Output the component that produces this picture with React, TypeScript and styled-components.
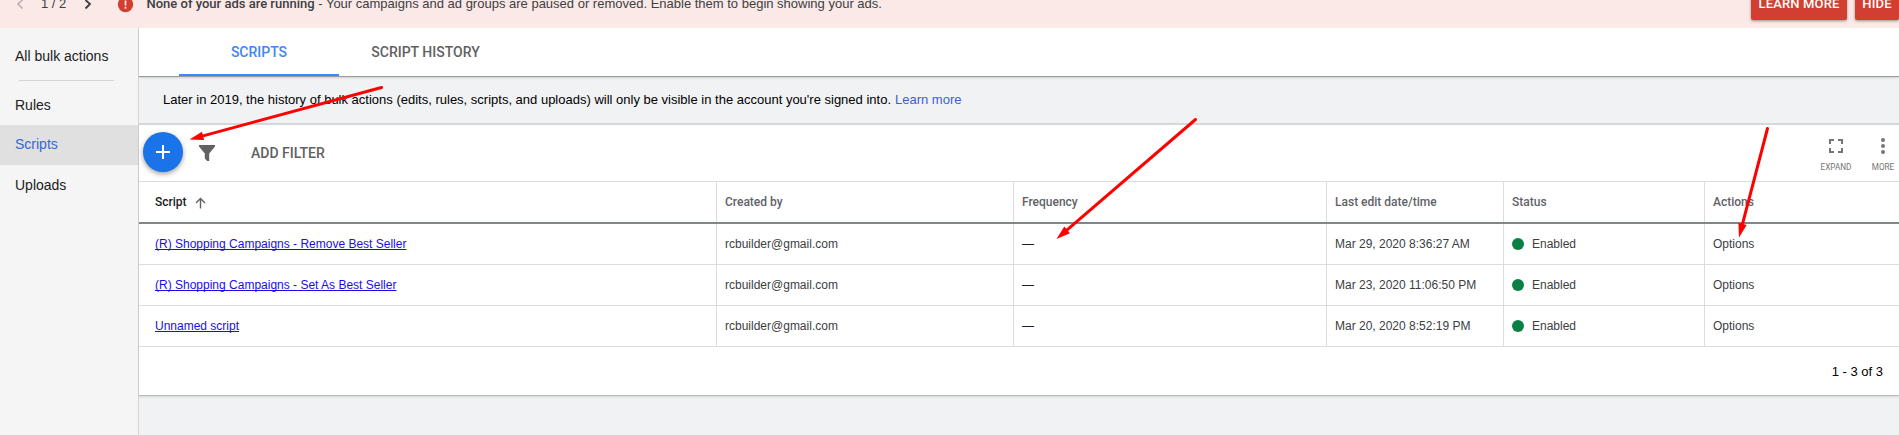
import React from 'react';
import styled, { createGlobalStyle } from 'styled-components';

const TEXT_FONT = "'Liberation Sans', Arial, sans-serif";
const TITLE_FONT = "Roboto, 'Liberation Sans', sans-serif";

const GlobalStyle = createGlobalStyle`
  * { box-sizing: border-box; }
  body { margin: 0; font-family: ${TEXT_FONT}; background: #f1f2f4; overflow: hidden; }
`;

const Page = styled.div`
  position: relative;
  width: 1899px;
  height: 435px;
  display: flex;
  flex-direction: column;
  overflow: hidden;
`;

const Banner = styled.header`
  flex: none;
  height: 28px;
  display: flex;
  align-items: flex-start;
  background: #fae9e7;
  color: #3c4043;
  font-size: 13px;
  line-height: 16px;
  white-space: nowrap;
  overflow: hidden;
`;

const Pager = styled.div`
  flex: none;
  width: 117px;
  height: 8px;
  display: flex;
  align-items: center;
  padding-left: 16px;
`;

const PagerCount = styled.span`
  width: 26px;
  margin: 0 17px;
  white-space: nowrap;
`;

const AlertIcon = styled.svg`
  display: block;
  margin-top: -4px;
  width: 17px;
  height: 17px;
`;

const BannerText = styled.p`
  flex: 1;
  margin: -4px 0 0 12.5px;
  b {
    font-family: ${TITLE_FONT};
    font-weight: 500;
  }
`;

const BannerButton = styled.button<{ $width: number }>`
  width: ${(p) => p.$width}px;
  height: 32px;
  margin: -12px 0 0 8px;
  padding: 0;
  border: 0;
  border-radius: 2px;
  background: #d23f31;
  color: #fff;
  font: 500 13px/32px ${TITLE_FONT};
  letter-spacing: 0.15px;
  white-space: nowrap;
  box-shadow: 0 1px 3px rgba(0, 0, 0, 0.4);
`;

const Body = styled.div`
  flex: 1;
  display: flex;
  min-height: 0;
`;

const Sidebar = styled.nav`
  flex: none;
  width: 139px;
  background: #f5f5f5;
  border-right: 1px solid #d5d5d5;
  display: flex;
  flex-direction: column;
`;

const NavItem = styled.a<{ $active?: boolean; $height: number; $top?: number; $bottom?: number }>`
  height: ${(p) => p.$height}px;
  display: flex;
  align-items: center;
  padding: ${(p) => p.$top || 0}px 0 ${(p) => p.$bottom || 0}px 15px;
  font-size: 14px;
  color: ${(p) => (p.$active ? '#3367d6' : '#212121')};
  background: ${(p) => (p.$active ? '#e0e0e0' : 'transparent')};
`;

const NavDivider = styled.hr`
  width: 95px;
  height: 1px;
  margin: 0 0 0 19px;
  border: 0;
  background: #d5d5d5;
`;

const Main = styled.main`
  flex: 1;
  min-width: 0;
  display: flex;
  flex-direction: column;
`;

const Tabs = styled.div`
  flex: none;
  height: 48px;
  display: flex;
  padding-left: 40px;
  background: #fff;
  box-shadow: 0 1px 0 #979a9c, 0 2px 2px rgba(0, 0, 0, 0.14);
`;

const Tab = styled.a<{ $active?: boolean; $width: number }>`
  width: ${(p) => p.$width}px;
  display: flex;
  align-items: center;
  justify-content: center;
  padding-top: 2px;
  border-bottom: 2px solid ${(p) => (p.$active ? '#4285f4' : 'transparent')};
  color: ${(p) => (p.$active ? '#4285f4' : '#616161')};
  font: 500 14px ${TITLE_FONT};
`;

const Notice = styled.div`
  flex: none;
  height: 47px;
  padding: 0 0 1px 24px;
  display: flex;
  align-items: center;
  gap: 4px;
  font-size: 13px;
  color: #000;
`;

const NoticeLink = styled.a`
  color: #3c5fd6;
`;

const Card = styled.section`
  flex: none;
  background: #fff;
  border-top: 2px solid #d6d7d8;
  box-shadow: 0 1px 0 #b9babb, 0 2px 2px rgba(0, 0, 0, 0.12);
`;

const Toolbar = styled.div`
  height: 57px;
  display: flex;
  align-items: flex-start;
  border-bottom: 1px solid #dadce0;
`;

const AddButton = styled.button`
  width: 40px;
  height: 40px;
  margin: 7px 0 0 4px;
  padding: 0;
  border: 0;
  border-radius: 50%;
  background: #1a73e8;
  box-shadow: 0 2px 5px rgba(0, 0, 0, 0.38);
  svg { display: block; }
`;

const FilterIcon = styled.svg`
  width: 16px;
  height: 16px;
  margin: 20px 0 0 16px;
`;

const AddFilter = styled.span`
  flex: 1;
  margin: 20px 0 0 36px;
  font: 500 14px/16px ${TITLE_FONT};
  color: #616161;
`;

const Tools = styled.div`
  display: flex;
  gap: 15px;
  padding: 12px 0 0;
`;

const Tool = styled.div`
  width: 32px;
  display: flex;
  flex-direction: column;
  align-items: center;
  font: 8.2px/10px ${TITLE_FONT};
  color: #757575;
  svg { margin-bottom: 7px; }
`;

const Row = styled.div`
  height: 41px;
  display: grid;
  grid-template-columns: 578px 297px 313px 177px 201px 1fr;
  border-bottom: 1px solid #dadce0;
`;

const HeadRow = styled(Row)`
  height: 42px;
  border-bottom: 2px solid #80868b;
`;

const Cell = styled.div`
  display: flex;
  align-items: center;
  padding: 0 0 0 8px;
  border-right: 1px solid #dadce0;
  color: #3c4043;
  font-size: 12px;
  white-space: nowrap;
  &:first-child { padding-left: 16px; }
  &:last-child { border-right: 0; }
`;

const HeadCell = styled(Cell)<{ $sorted?: boolean }>`
  font-family: ${TITLE_FONT};
  font-weight: 500;
  color: ${(p) => (p.$sorted ? '#202124' : '#5f6368')};
  svg { margin: 2px 0 0 8px; }
`;

const ScriptLink = styled.a`
  color: #1a0ee8;
  text-decoration: underline;
  text-underline-offset: 1px;
  text-decoration-skip-ink: none;
`;

const Dash = styled.span`
  color: #202124;
`;

const Dot = styled.span`
  width: 12px;
  height: 12px;
  margin-right: 8px;
  border-radius: 50%;
  background: #0b8043;
`;

const Footer = styled.div`
  height: 48px;
  display: flex;
  align-items: center;
  justify-content: flex-end;
  padding: 0 16px 0 0;
  font-size: 13px;
  color: #000;
`;

const Annotations = styled.svg`
  position: absolute;
  inset: 0;
  pointer-events: none;
`;

const scripts = [
  { name: '(R) Shopping Campaigns - Remove Best Seller', edited: 'Mar 29, 2020 8:36:27 AM' },
  { name: '(R) Shopping Campaigns - Set As Best Seller', edited: 'Mar 23, 2020 11:06:50 PM' },
  { name: 'Unnamed script', edited: 'Mar 20, 2020 8:52:19 PM' },
];

const arrows = [
  { from: [381.5, 87.5], to: [189.5, 139.5] },
  { from: [1195.5, 119.5], to: [1056.5, 239] },
  { from: [1767.5, 128.5], to: [1739, 237.5] },
];

function Arrow({ from, to }: { from: number[]; to: number[] }) {
  const dx = to[0] - from[0];
  const dy = to[1] - from[1];
  const len = Math.hypot(dx, dy);
  const ux = dx / len;
  const uy = dy / len;
  const bx = to[0] - ux * 14;
  const by = to[1] - uy * 14;
  return (
    <g>
      <line x1={from[0]} y1={from[1]} x2={bx} y2={by} stroke="#f00" strokeWidth="3" strokeLinecap="round" />
      <polygon
        points={`${to[0]},${to[1]} ${bx - uy * 4.3},${by + ux * 4.3} ${bx + uy * 4.3},${by - ux * 4.3}`}
        fill="#f00"
      />
    </g>
  );
}

export default function App() {
  return (
    <Page>
      <GlobalStyle />
      <Banner>
        <Pager>
          <svg width="8" height="12" viewBox="0 0 8 12" fill="none" stroke="#b9adac" strokeWidth="1.6">
            <path d="M6.5 2L2 6l4.5 4.5" />
          </svg>
          <PagerCount>1 / 2</PagerCount>
          <svg width="8" height="12" viewBox="0 0 8 12" fill="none" stroke="#3c4043" strokeWidth="1.8">
            <path d="M1.5 2L6 6l-4.5 4.5" />
          </svg>
        </Pager>
        <AlertIcon viewBox="0 0 17 17">
          <circle cx="8.5" cy="8.5" r="7.7" fill="#d23f31" />
          <path d="M8.5 4.4v5M8.5 10.8v1.9" stroke="#fae9e7" strokeWidth="1.7" />
        </AlertIcon>
        <BannerText>
          <b>None of your ads are running</b> - Your campaigns and ad groups are paused or removed. Enable them to begin
          showing your ads.
        </BannerText>
        <BannerButton $width={96}>LEARN MORE</BannerButton>
        <BannerButton $width={44}>HIDE</BannerButton>
      </Banner>
      <Body>
        <Sidebar>
          <NavItem $height={52} $top={4}>
            All bulk actions
          </NavItem>
          <NavDivider />
          <NavItem $height={44} $top={4}>
            Rules
          </NavItem>
          <NavItem $height={40} $bottom={2} $active>
            Scripts
          </NavItem>
          <NavItem $height={40}>Uploads</NavItem>
        </Sidebar>
        <Main>
          <Tabs>
            <Tab $width={160} $active>
              SCRIPTS
            </Tab>
            <Tab $width={173}>SCRIPT HISTORY</Tab>
          </Tabs>
          <Notice>
            <span>
              Later in 2019, the history of bulk actions (edits, rules, scripts, and uploads) will only be visible in the
              account you're signed into.
            </span>
            <NoticeLink>Learn more</NoticeLink>
          </Notice>
          <Card>
            <Toolbar>
              <AddButton>
                <svg width="40" height="40" viewBox="0 0 40 40" stroke="#fff" strokeWidth="2">
                  <path d="M13 20h14M20 13v14" />
                </svg>
              </AddButton>
              <FilterIcon viewBox="0 0 16 16">
                <path d="M0 0h16v1.5L10.2 8.5V16H8.2L5.8 13.6V8.5L0 1.5z" fill="#616161" />
              </FilterIcon>
              <AddFilter>ADD FILTER</AddFilter>
              <Tools>
                <Tool>
                  <svg width="16" height="18" viewBox="0 0 16 18" fill="none" stroke="#757575" strokeWidth="2">
                    <path d="M2 7V3h4M10 3h4v4M14 11v4h-4M6 15H2v-4" />
                  </svg>
                  EXPAND
                </Tool>
                <Tool>
                  <svg width="16" height="18" viewBox="0 0 16 18" fill="#757575">
                    <circle cx="8" cy="3" r="2" />
                    <circle cx="8" cy="9" r="2" />
                    <circle cx="8" cy="15" r="2" />
                  </svg>
                  MORE
                </Tool>
              </Tools>
            </Toolbar>
            <HeadRow>
              <HeadCell $sorted>
                Script
                <svg width="11" height="12" viewBox="0 0 11 12" fill="none" stroke="#5f6368" strokeWidth="1.4">
                  <path d="M5.5 11.5V2M1 6l4.5-4.5L10 6" />
                </svg>
              </HeadCell>
              <HeadCell>Created by</HeadCell>
              <HeadCell>Frequency</HeadCell>
              <HeadCell>Last edit date/time</HeadCell>
              <HeadCell>Status</HeadCell>
              <HeadCell>Actions</HeadCell>
            </HeadRow>
            {scripts.map((s) => (
              <Row key={s.name}>
                <Cell>
                  <ScriptLink>{s.name}</ScriptLink>
                </Cell>
                <Cell>rcbuilder@gmail.com</Cell>
                <Cell>
                  <Dash>—</Dash>
                </Cell>
                <Cell>{s.edited}</Cell>
                <Cell>
                  <Dot />
                  Enabled
                </Cell>
                <Cell>Options</Cell>
              </Row>
            ))}
            <Footer>1 - 3 of 3</Footer>
          </Card>
        </Main>
      </Body>
      <Annotations width="1899" height="435" viewBox="0 0 1899 435">
        {arrows.map((a) => (
          <Arrow key={a.from[0]} {...a} />
        ))}
      </Annotations>
    </Page>
  );
}
